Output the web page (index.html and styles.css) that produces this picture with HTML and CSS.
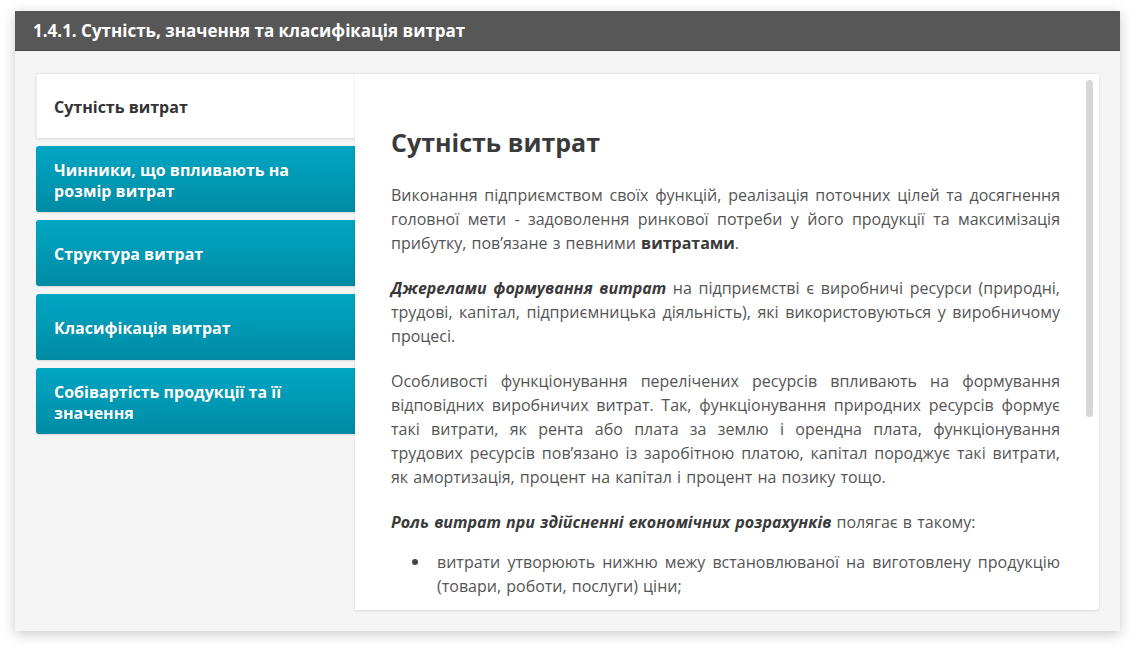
FILE: index.html
```html
<!DOCTYPE html>
<html lang="uk">
<head>
<meta charset="utf-8">
<title>1.4.1. Сутність, значення та класифікація витрат</title>
<link rel="stylesheet" href="styles.css">
</head>
<body>
<div class="window">
  <div class="window-header">1.4.1. Сутність, значення та класифікація витрат</div>
  <div class="window-body">
    <div class="tabs-layout">
      <nav class="tabs">
        <div class="tab tab-active">Сутність витрат</div>
        <div class="tab">Чинники, що впливають на розмір витрат</div>
        <div class="tab">Структура витрат</div>
        <div class="tab">Класифікація витрат</div>
        <div class="tab">Собівартість продукції та її значення</div>
      </nav>
      <section class="panel">
        <div class="panel-content">
          <h2 class="panel-title">Сутність витрат</h2>
          <p>Виконання підприємством своїх функцій, реалізація поточних цілей та досягнення головної мети - задоволення ринкової потреби у його продукції та максимізація прибутку, пов’язане з певними <b>витратами</b>.</p>
          <p><b><i>Джерелами формування витрат</i></b> на підприємстві є виробничі ресурси (природні, трудові, капітал, підприємницька діяльність), які використовуються у виробничому процесі.</p>
          <p>Особливості функціонування перелічених ресурсів впливають на формування відповідних виробничих витрат. Так, функціонування природних ресурсів формує такі витрати, як рента або плата за землю і орендна плата, функціонування трудових ресурсів пов’язано із заробітною платою, капітал породжує такі витрати, як амортизація, процент на капітал і процент на позику тощо.</p>
          <p class="lead-in"><b><i>Роль витрат при здійсненні економічних розрахунків</i></b> полягає в такому:</p>
          <ul>
            <li>витрати утворюють нижню межу встановлюваної на виготовлену продукцію (товари, роботи, послуги) ціни;</li>
          </ul>
        </div>
        <div class="scrollbar"><div class="scroll-thumb"></div></div>
      </section>
    </div>
  </div>
</div>
</body>
</html>
```
FILE: styles.css
```css
html, body {
  margin: 0;
  padding: 0;
  background: #ffffff;
}
body {
  padding: 11px 16px 22px 15px;
  font-family: "Open Sans", "Noto Sans", sans-serif;
}
.window {
  width: 1105px;
  background: #f5f5f5;
  box-shadow: 0 3px 12px rgba(0, 0, 0, 0.22);
}
.window-header {
  height: 40px;
  box-sizing: border-box;
  background: #575757;
  color: #ffffff;
  font-weight: 700;
  font-size: 17px;
  line-height: 40px;
  padding-left: 18px;
  border-bottom: 1px solid #4a4a4a;
}
.window-body {
  padding: 22px 21px 21px 21px;
}
.tabs-layout {
  display: flex;
  height: 537px;
}
.tabs {
  width: 319px;
  flex: none;
  display: flex;
  flex-direction: column;
  gap: 8px;
}
.tab {
  height: 66px;
  box-sizing: border-box;
  display: flex;
  align-items: center;
  padding: 3px 30px 0 18px;
  font-size: 16px;
  line-height: 21px;
  font-weight: 700;
  color: #ffffff;
  background: linear-gradient(to bottom, #00a6c3 0%, #0099b4 50%, #008ba3 100%);
  border-radius: 3px 0 0 3px;
  box-shadow: 0 1px 2px rgba(0, 0, 0, 0.12);
  text-shadow: 0 0 1px rgba(0, 0, 0, 0.15);
}
.tab-active {
  height: 65px;
  background: #ffffff;
  color: #333333;
  text-shadow: none;
  border-radius: 3px 0 0 0;
  box-shadow: 0 1px 3px rgba(0, 0, 0, 0.12);
  border-top: 1px solid #e8e8e8;
  border-left: 1px solid #ececec;
  padding: 2px 30px 0 17px;
}
.panel {
  flex: 1;
  position: relative;
  background: #ffffff;
  border-radius: 0 3px 3px 0;
  box-shadow: 0 1px 3px rgba(0, 0, 0, 0.12);
  border-top: 1px solid #e8e8e8;
  overflow: hidden;
}
.panel-content {
  padding: 51px 39px 0 36px;
  color: #555555;
  font-size: 16px;
  line-height: 24px;
  word-spacing: 1px;
}
.panel-title {
  margin: 0 0 24px 0;
  font-size: 25px;
  line-height: 34px;
  font-weight: 700;
  color: #3a3a3a;
  word-spacing: 0;
}
.panel-content p {
  margin: 0 0 21px 0;
  text-align: justify;
}
.panel-content p.lead-in {
  margin-bottom: 16px;
}
.panel-content b {
  color: #3a3a3a;
}
.panel-content ul {
  margin: 0;
  padding-left: 46px;
  list-style: none;
}
.panel-content li {
  position: relative;
  text-align: justify;
}
.panel-content li::before {
  content: "";
  position: absolute;
  left: -25px;
  top: 9px;
  width: 6px;
  height: 6px;
  border-radius: 50%;
  background: #444444;
}
.scrollbar {
  position: absolute;
  top: 6px;
  right: 6px;
  width: 7px;
  height: 337px;
}
.scroll-thumb {
  width: 100%;
  height: 100%;
  background: #d6d6d6;
  border-radius: 4px;
}
```
